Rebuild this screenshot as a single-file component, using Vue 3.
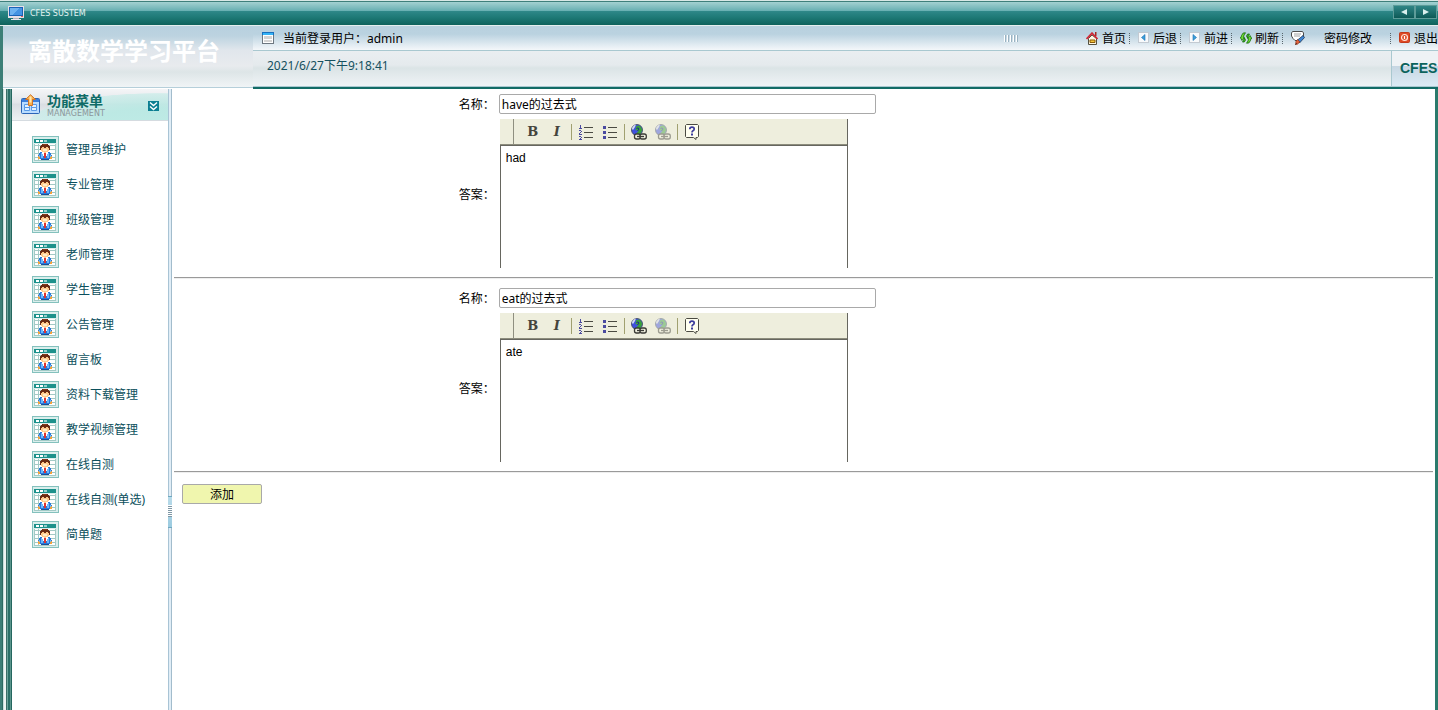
<script setup>
import { ref } from 'vue'

const menu = [
  '管理员维护', '专业管理', '班级管理', '老师管理', '学生管理', '公告管理',
  '留言板', '资料下载管理', '教学视频管理', '在线自测', '在线自测(单选)', '简单题',
]
const questions = ref([
  { name: 'have的过去式', answer: 'had' },
  { name: 'eat的过去式', answer: 'ate' },
])
</script>

<template>
  <div class="page">
    <div class="titlebar">
      <svg class="monitor" width="16" height="14" viewBox="0 0 16 14" shape-rendering="crispEdges">
        <rect x="0" y="0" width="16" height="12" fill="#e6e0e6" />
        <rect x="1" y="1" width="14" height="9" fill="#1b62b5" />
        <rect x="2" y="2" width="12" height="7" fill="#4593e2" />
        <path d="M2 2h9L5 9H2z" fill="#6db2f0" />
        <rect x="13" y="10" width="2" height="1" fill="#e0605c" />
        <rect x="5" y="12" width="6" height="1" fill="#b9b4bb" />
        <rect x="3" y="13" width="10" height="1" fill="#e6e8ee" />
      </svg>
      <span class="system">CFES SUSTEM</span>
      <div class="arrows">
        <button type="button" aria-label="Back">
          <svg width="6" height="8" viewBox="0 0 6 8"><path d="M6 1v6L0 4z" fill="#d9f0ee" /></svg>
        </button>
        <button type="button" aria-label="Forward">
          <svg width="6" height="8" viewBox="0 0 6 8"><path d="M0 1v6l6-3z" fill="#d9f0ee" /></svg>
        </button>
      </div>
    </div>

    <header class="header">
      <h1 class="brand">离散数学学习平台</h1>
      <div class="head-main">
        <div class="userbar">
          <svg width="12" height="12" viewBox="0 0 12 12" shape-rendering="crispEdges">
            <rect width="12" height="12" fill="#6d7780" />
            <rect width="12" height="3" fill="#1870c0" />
            <rect x="1" y="1" width="10" height="2" fill="#35b4f6" />
            <rect x="1" y="3" width="10" height="8" fill="#fff" />
            <rect x="2" y="4" width="8" height="3" fill="#d4d4d4" />
            <rect x="2" y="8" width="8" height="2" fill="#d4d4d4" />
          </svg>
          <span class="user">当前登录用户：admin</span>
          <span class="grip"></span>
          <nav class="tools">
            <a href="#">
              <svg width="13" height="13" viewBox="0 0 13 13">
                <path d="M2.500 6.500 6 3l4.500 3.500V12.500h-8z" fill="#fdf8e6" stroke="#55503f" />
                <path d="M9 0h1.500v4H9z" fill="#a32a20" />
                <path d="M.5 7 6 1.200 11.500 7" fill="none" stroke="#d02836" stroke-width="1.800" />
                <path d="M4 8h5v2.500H4z" fill="#f5c53a" stroke="#8b5a06" />
              </svg>首页
            </a>
            <i></i>
            <a href="#">
              <svg width="12" height="12" viewBox="0 0 12 12">
                <rect x=".5" y=".5" width="10" height="10" fill="#f8fafc" stroke="#c3cad2" />
                <path d="M7 2.500v6L3.500 5.500z" fill="#3da0dc" stroke="#1d6fae" stroke-width=".6" />
              </svg>后退
            </a>
            <i></i>
            <a href="#">
              <svg width="12" height="12" viewBox="0 0 12 12">
                <rect x=".5" y=".5" width="10" height="10" fill="#f8fafc" stroke="#c3cad2" />
                <path d="M4 2.500v6l3.500-3z" fill="#3da0dc" stroke="#1d6fae" stroke-width=".6" />
              </svg>前进
            </a>
            <i></i>
            <a href="#">
              <svg width="12" height="12" viewBox="0 0 12 12">
                <path d="M5.500.8 3.200 1 1.500 3.500 1 5.500H.3L2 8.500 4.500 5.500H3.500L4 3z" fill="#6fdd32" stroke="#13660a" stroke-width=".8" />
                <path d="M4.500 6 3.500 8.500l-1 1.500h1.800L5.500 8z" fill="#3fc51c" stroke="#13660a" stroke-width=".8" />
                <path d="M6.500 11.200l2.300-.2 1.700-2.500.5-2h.8L10 3.500 7.500 6.500h1L8 9z" fill="#6fdd32" stroke="#13660a" stroke-width=".8" />
                <path d="M7.500 6l1-2.500 1-1.500H7.700L6.500 4z" fill="#3fc51c" stroke="#13660a" stroke-width=".8" />
              </svg>刷新
            </a>
            <i></i>
            <a href="#" class="password">
              <svg width="14" height="14" viewBox="0 0 14 14">
                <path d="M1.500.5h10l1 1.500v5l-4 2.500H4L2 7.500.5 5V2z" fill="#fff" stroke="#4b4b4b" />
                <path d="M3 3h7M3 5h6" stroke="#a3a3a3" />
                <path d="M13.500 6.500 8.500 12l-2.500-2.500L12 4.500z" fill="#3d86d5" stroke="#233a55" stroke-width=".8" />
                <path d="M6.500 8.500 9 11l-3 2.500-1.500-.2.500-3z" fill="#e0603a" stroke="#7d2c16" stroke-width=".6" />
                <path d="M5.500 12.500l-1 1" stroke="#111" />
              </svg>密码修改
            </a>
            <i></i>
            <a href="#">
              <svg width="12" height="12" viewBox="0 0 12 12">
                <rect x=".5" y=".5" width="10" height="10" rx="1" fill="#df4a25" stroke="#c23a1c" />
                <circle cx="5.500" cy="5.500" r="3" fill="none" stroke="#ffe4da" stroke-width="1.200" />
                <path d="M5.500 4v3" stroke="#fff" stroke-width="1.200" />
              </svg>退出
            </a>
          </nav>
        </div>
        <div class="datebar">
          <time>2021/6/27下午9:18:41</time>
          <strong class="mark">CFES</strong>
        </div>
      </div>
    </header>

    <div class="body">
      <div class="rail"></div>
      <aside class="sidebar">
        <div class="menu-head">
          <svg width="20" height="21" viewBox="0 0 20 21">
            <rect x=".5" y="4.500" width="18" height="15" rx="1" fill="#b9dcff" stroke="#2b65b8" />
            <path d="M1 5h17v3H1z" fill="#3c7fdc" />
            <path d="M3.500 10.500h5v3h-5zM10.500 10.500h5v3h-5zM3.500 13.500h5v3h-5zM10.500 13.500h5v3h-5z" fill="#e2f1ff" stroke="#5a9ae6" />
            <path d="M9.500.7 14.500 5.500h-3v6h-4v-6h-3z" fill="#fbb04a" stroke="#cf7428" />
            <path d="M9.500 2.500v6" stroke="#ffe9b0" stroke-width="2" />
          </svg>
          <div class="menu-title">
            <h2>功能菜单</h2>
            <span>MANAGEMENT</span>
          </div>
          <button type="button" class="collapse" aria-label="Collapse menu">
            <svg width="11" height="10" viewBox="0 0 11 10">
              <path d="M2 1.500 5.500 4.500 9 1.500M2 5.500l3.500 3 3.500-3" fill="none" stroke="#fff" stroke-width="1.400" />
            </svg>
          </button>
        </div>
        <ul class="menu">
          <li v-for="item in menu" :key="item">
            <a href="#">
              <svg width="27" height="27" viewBox="0 0 27 27" shape-rendering="crispEdges">
                <rect width="27" height="27" fill="#84c1bd" />
                <rect x="1" y="1" width="25" height="25" fill="#d9eeec" />
                <rect x="2" y="8" width="22" height="17" fill="#fff" />
                <rect x="2" y="3" width="22" height="4" fill="#1b918b" />
                <path d="M4 4h3v2H4zM8 4h3v2H8z" fill="#fff" />
                <rect x="12" y="4" width="3" height="2" fill="#9ad0cc" />
                <path d="M2 8h1v16H2zM23 8h1v16h-1zM6 8h1v16H6zM3 9h20v1H3zM3 13h20v1H3zM3 17h20v1H3zM3 21h20v1H3zM2 24h22v1H2z" fill="#a3cac6" />
                <path d="M10 8h6v1h1v1h1v4h-1v1H9v-1H8v-4h1V9h1z" fill="#6a2a12" />
                <path d="M11 8h4v1h-4z" fill="#8a3c1c" />
                <path d="M9 12h1v-1h2v1h2v-1h2v1h1v3h-1v1h-2v1h-2v-1h-2v-1H9z" fill="#ffc98c" />
                <path d="M11 13h4v2h-4z" fill="#ffecc8" />
                <path d="M8 16h2v1h6v-1h2v1h1v2h1v4h-3v1H9v-1H6v-4h1v-2h1z" fill="#2a78d8" />
                <path d="M9 17h2v5H9zM15 17h2v5h-2zM7 19h1v2H7zM18 19h1v2h-1z" fill="#6ab8fc" />
                <path d="M10 16h1v1h4v-1h1v2h-1v2h-4v-2h-1z" fill="#fff" />
                <path d="M12 17h2v5h-2z" fill="#dc3434" />
                <path d="M6 20h1v1h1v2H6zM19 20h1v3h-2v-2h1z" fill="#f2a33c" />
                <path d="M9 23h8v1H9z" fill="#174e9e" />
              </svg>
              <span>{{ item }}</span>
            </a>
          </li>
        </ul>
      </aside>
      <div class="splitter"><span class="handle"></span></div>

      <main class="content">
        <form @submit.prevent>
          <template v-for="(q, n) in questions" :key="n">
            <div class="question">
              <label :for="'name' + n">名称：</label>
              <input :id="'name' + n" v-model="q.name" type="text" class="name" />
              <label :for="'answer' + n">答案：</label>
              <div class="editor">
                <div class="toolbar">
                  <span class="lead"></span>
                  <button type="button" aria-label="Bold" class="bold">B</button>
                  <button type="button" aria-label="Italic" class="italic">I</button>
                  <span class="sep"></span>
                  <button type="button" aria-label="Numbered list">
                    <svg width="16" height="16" viewBox="0 0 16 16" shape-rendering="crispEdges">
                      <path d="M6 3h9v1H6zM6 8h9v1H6zM6 13h9v1H6z" fill="#4a4a42" />
                      <path d="M2 1h1v3h1v1H1V4h1V2H1zM1 6h2v1h1v1H3v1H2v1h2v1H1V9h1V8h1V7H1zM1 12h2v1h1v1H3v1h1v1H1v-1h1v-1h1v-1H1z" fill="#4a4aa0" />
                    </svg>
                  </button>
                  <button type="button" aria-label="Bulleted list">
                    <svg width="16" height="16" viewBox="0 0 16 16" shape-rendering="crispEdges">
                      <path d="M6 3h9v1H6zM6 8h9v1H6zM6 13h9v1H6z" fill="#4a4a42" />
                      <path d="M1 2h3v3H1zM1 7h3v3H1zM1 12h3v3H1z" fill="#4a4aa0" />
                    </svg>
                  </button>
                  <span class="sep"></span>
                  <button v-for="link in ['Link', 'Unlink']" :key="link" type="button" :aria-label="link" :class="{ faded: link === 'Unlink' }">
                    <svg width="16" height="16" viewBox="0 0 16 16">
                      <circle cx="6" cy="6" r="5.500" fill="#3f4fe0" stroke="#3a4158" stroke-width=".8" />
                      <path d="M5 2.500q3-2 5 .5l1.300 3-1.800 4-3 1-1-2 2-2-3-1z" fill="#3aa03c" />
                      <path d="M1 5q0-3 4-4.500L4 3 2 6z" fill="#d3daf2" />
                      <path d="M5.500 4.500q2-1.500 2.500.5L6.500 7" fill="none" stroke="#1b2a8a" />
                      <rect x="3.500" y="10" width="6" height="5" rx="2" fill="#eeeedd" stroke="#3a3a35" stroke-width="1.300" />
                      <rect x="9" y="10" width="6.300" height="5" rx="2" fill="#eeeedd" stroke="#3a3a35" stroke-width="1.300" />
                      <path d="M6 12.500h7" stroke="#3a3a35" stroke-width="1.300" />
                    </svg>
                  </button>
                  <span class="sep"></span>
                  <button type="button" aria-label="Help">
                    <svg width="16" height="16" viewBox="0 0 16 16">
                      <path d="M2.500.5h11l1 1v11l-1 1H12v2l-2.500-2h-7l-1-1v-11z" fill="#fffff0" stroke="#4a4a42" />
                      <path d="M5.800 5.200q0-2 2.200-2t2.200 1.800q0 1.200-1.200 1.800-1 .6-1 1.700" fill="none" stroke="#3c3c9c" stroke-width="1.700" />
                      <path d="M7 9.500h2v2H7z" fill="#3c3c9c" />
                    </svg>
                  </button>
                </div>
                <textarea :id="'answer' + n" v-model="q.answer"></textarea>
              </div>
            </div>
            <hr />
          </template>
          <button type="submit" class="add">添加</button>
        </form>
      </main>
    </div>
  </div>
</template>

<style>
body {
  margin: 0;
  background: #fff;
}
</style>

<style scoped>
.page {
  display: flex;
  flex-direction: column;
  min-height: 100vh;
  overflow: hidden;
  color: #000;
  font: 12px/16px "Noto Sans", "Noto Sans CJK SC", sans-serif;
}
.page * {
  box-sizing: border-box;
}
svg {
  display: block;
  flex: none;
}
a {
  color: inherit;
  text-decoration: none;
}
button {
  padding: 0;
  border: 0;
  background: none;
  font: inherit;
  color: inherit;
}
.titlebar {
  display: flex;
  align-items: center;
  height: 26px;
  padding: 0 0 0 8px;
  border-top: 1px solid #d8e8e6;
  border-bottom: 1px solid #e4eeee;
  background: linear-gradient(#3e7f7b 1px, #a3d1d1 1px, #66aeb1 10px, #2f8889 10px, #1f7a77 16px, #0e625c 24px);
}
.system {
  padding-top: 1px;
  margin-left: 6px;
  color: #e4f4f2;
  font: 8px/10px "DejaVu Sans", sans-serif;
}
.arrows {
  display: flex;
  margin: 0 1px 2px auto;
}
.arrows button {
  display: flex;
  align-items: center;
  justify-content: center;
  width: 22px;
  height: 14px;
  border: 1px solid #5d9c99;
  background: linear-gradient(#2f8586, #0d5a57);
}
.header {
  display: flex;
  height: 63px;
  border-left: 3px solid #3c7f77;
}
.brand {
  width: 250px;
  height: 62px;
  margin: 0;
  padding-left: 25px;
  border-bottom: 1px solid #b5cfda;
  background: linear-gradient(#b7d0df, #bcd3e0 10px, #e0e6ec 24px, #e8ebee 40px, #dde5e7 46px, #f0f4f6);
  color: #fff;
  font-size: 24px;
  line-height: 50px;
  white-space: nowrap;
}
.head-main {
  flex: 1;
  min-width: 0;
  border-bottom: 2px solid #126b66;
}
.userbar {
  display: flex;
  align-items: center;
  height: 25px;
  padding-left: 9px;
  border-bottom: 1px solid #a9c8d0;
  background: linear-gradient(#b9d1df, #bad2e0 8px, #f4f7fa);
}
.user {
  padding-top: 2px;
  margin-left: 9px;
  white-space: nowrap;
}
.grip {
  width: 14px;
  height: 7px;
  margin-left: auto;
  background: repeating-linear-gradient(90deg, #fff 0 1px, #9ab3c2 1px 2px, transparent 2px 3px);
}
.tools {
  display: flex;
  align-items: center;
  padding-top: 2px;
  margin-left: 68px;
  white-space: nowrap;
}
.tools a {
  display: flex;
  align-items: center;
  gap: 3px;
}
.tools svg {
  margin-bottom: 2px;
}
.tools i {
  width: 1px;
  height: 12px;
  margin: 0 8px 0 3px;
  background: repeating-linear-gradient(#59666d 0 1px, transparent 1px 2px);
}
.tools .password {
  gap: 19px;
  margin-right: 15px;
}
.datebar {
  display: flex;
  justify-content: space-between;
  height: 36px;
  border-bottom: 1px solid #a9c8d0;
  background: linear-gradient(#eaeef1, #e5eaed 14px, #dbe4e6 17px, #eff3f6);
}
time {
  padding: 7px 0 0 14px;
  color: #15505f;
}
.mark {
  width: 47px;
  overflow: hidden;
  padding-left: 8px;
  border-left: 1px solid #a9c8d0;
  background: linear-gradient(#eef2f5 15px, #c6d6e2 15px, #dcebf5);
  color: #0b635c;
  font: bold 14px/35px "Liberation Sans", Arial, sans-serif;
}
.body {
  display: flex;
  flex: 1;
}
.rail {
  width: 12px;
  background: linear-gradient(90deg, #3c7f77 2px, #2c6a62 2px 3px, #c6dedb 3px 4px, #edf4f2 4px 6px, #3b6f68 6px 7px, #6aa39b 7px 8px, #2a7068 8px 10px, #5c958d 10px 11px, #24675f 11px);
}
.sidebar {
  width: 156px;
}
.menu-head {
  display: flex;
  align-items: center;
  height: 32px;
  padding: 0 9px;
  border-bottom: 1px solid #d5dbe0;
  background:
    radial-gradient(ellipse 130px 30px at 146px 34px, rgba(184, 233, 227, 0.9) 50%, rgba(200, 236, 232, 0.7) 98%, transparent 100%),
    linear-gradient(#f4f5f7, #e2e5e9 14px, #d9dde2 15px, #edf1f3);
}
.menu-title {
  margin: 0 auto 0 6px;
}
.menu-title h2 {
  margin: 0;
  color: #0f6b66;
  font-size: 14px;
  line-height: 18px;
}
.menu-title span {
  display: block;
  color: #8b979b;
  font: 8px/8px "DejaVu Sans", sans-serif;
}
.collapse {
  display: flex;
  width: 11px;
  height: 10px;
  margin-top: 2px;
  background: #0c7f92;
}
.menu {
  display: grid;
  gap: 8px;
  margin: 0;
  padding: 15px 0 15px 20px;
  list-style: none;
}
.menu a {
  display: flex;
  align-items: center;
  gap: 7px;
  height: 27px;
  color: #0b4f5c;
  white-space: nowrap;
}
.splitter {
  position: relative;
  width: 4px;
  background: linear-gradient(90deg, #a9c4d5 1px, #e0edf6 1px 3px, #a2bccc 3px);
}
.handle {
  position: absolute;
  top: 407px;
  left: 0;
  width: 4px;
  height: 32px;
  border: 1px solid #6fa8c0;
  border-width: 1px 0;
  background:
    repeating-linear-gradient(#fff 0 1px, #7f98a6 1px 2px) 0 8px / 4px 12px no-repeat,
    linear-gradient(#b9dbea, #9ccbe0);
}
.content {
  flex: 1;
  min-width: 0;
  padding: 5px 2px 16px;
  border-right: 3px solid #2a7a6c;
}
.question {
  display: grid;
  grid-template-columns: calc(25% + 6px) 1fr;
  align-items: center;
  gap: 5px 4px;
}
.question label {
  justify-self: end;
  padding-top: 2px;
}
.name {
  width: 377px;
  height: 20px;
  padding: 0 2px;
  border: 1px solid #a9a9a9;
  border-radius: 2px;
  background: #fff;
  color: #000;
  font: inherit;
}
.editor {
  width: 348px;
  margin-left: 1px;
  border-right: 1px solid #66665f;
}
.toolbar {
  display: flex;
  align-items: center;
  height: 26px;
  border-bottom: 1px solid #8c8c7c;
  background: #eeeedd;
}
.toolbar button {
  display: flex;
  align-items: center;
  justify-content: center;
  width: 24px;
  height: 24px;
  color: #44443c;
  font: bold 13px/24px "DejaVu Serif", serif;
}
.toolbar .italic {
  font-style: italic;
}
.toolbar .faded {
  opacity: 0.45;
}
.lead {
  width: 14px;
  height: 25px;
  margin-right: 7px;
  border-right: 1px solid #8f8f80;
}
.sep {
  width: 1px;
  height: 16px;
  margin: 0 2px;
  background: #a0a070;
}
textarea {
  display: block;
  width: 100%;
  height: 123px;
  padding: 5px;
  border: 0;
  border-top: 1px solid #66665f;
  border-left: 1px solid #66665f;
  background: #fff;
  color: #000;
  font: 12px/14px "Liberation Sans", Arial, sans-serif;
  resize: none;
}
hr {
  height: 2px;
  margin: 9px 0;
  border: 0;
  border-top: 1px solid #9a9a9a;
  border-bottom: 1px solid #eee;
}
.add {
  width: 80px;
  height: 20px;
  padding-top: 1px;
  margin: 2px 0 0 8px;
  border: 1px solid #a9a9a9;
  border-radius: 2px;
  background: #f0f6ae;
}
</style>
